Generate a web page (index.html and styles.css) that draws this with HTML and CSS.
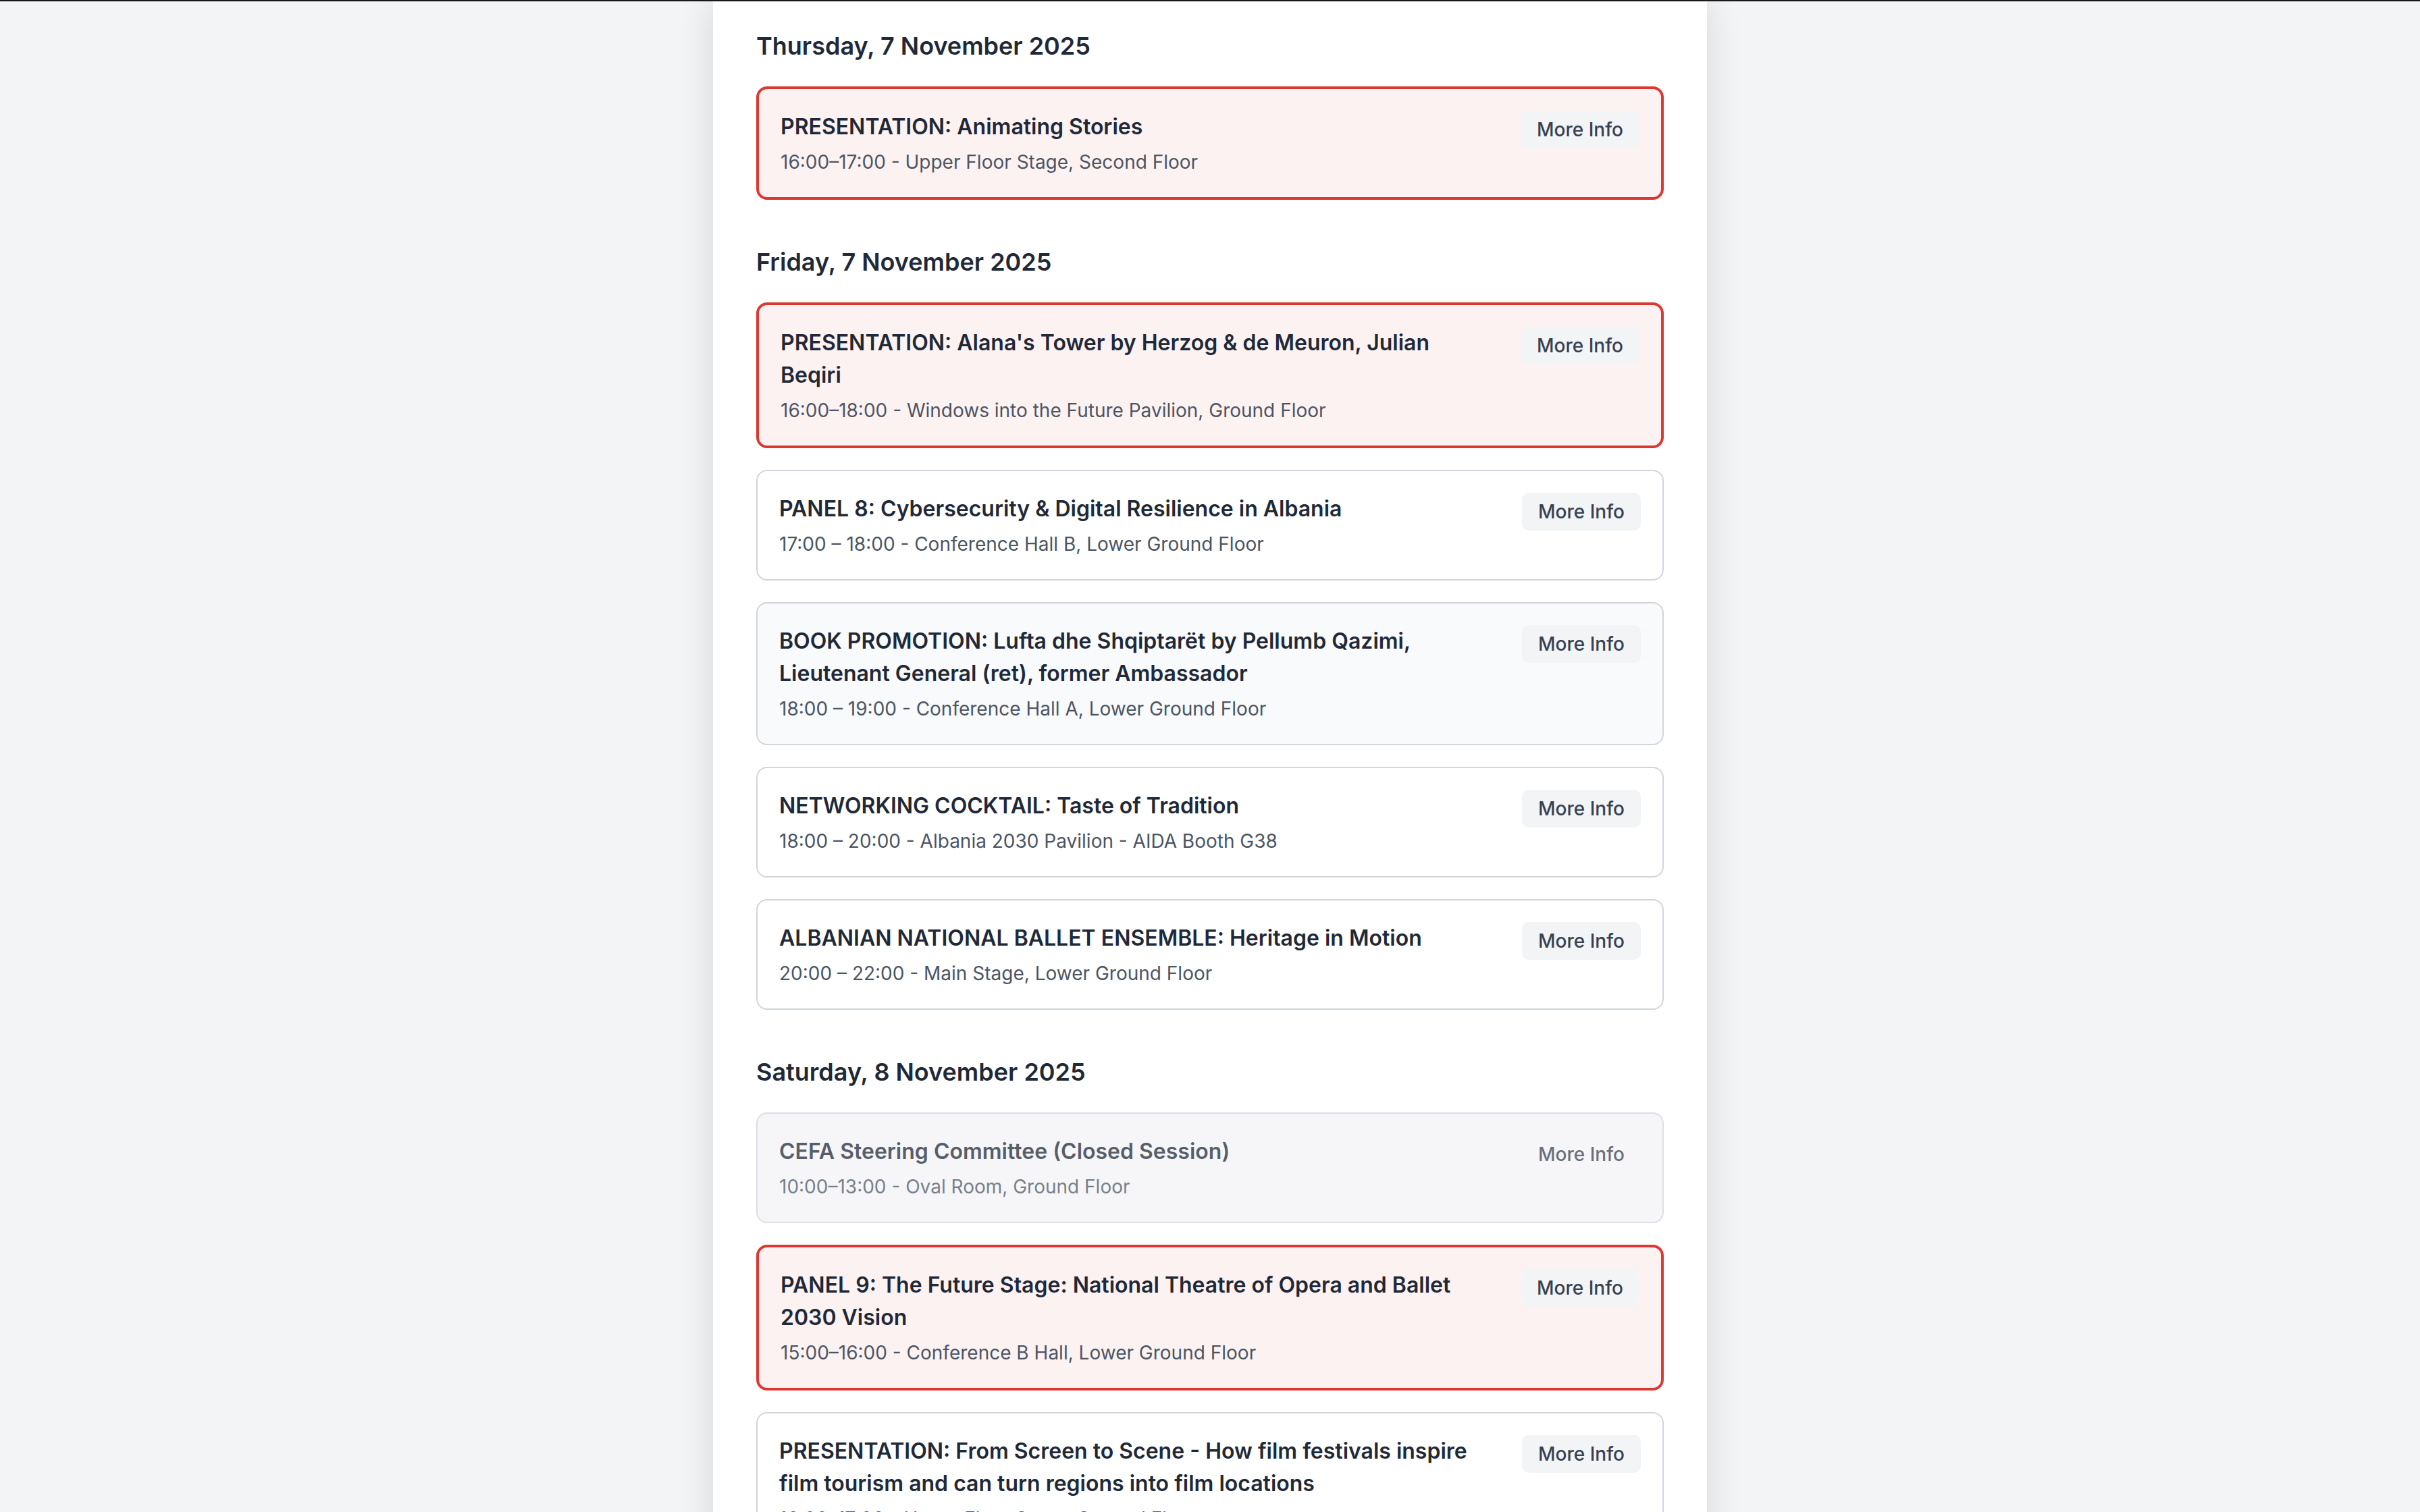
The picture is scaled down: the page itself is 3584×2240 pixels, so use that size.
FILE: index.html
```html
<!DOCTYPE html>
<html lang="en">
<head>
<meta charset="utf-8">
<title>Programme</title>
<link rel="stylesheet" href="styles.css">
</head>
<body>
<div class="topline"></div>
<main class="column">
  <section class="day">
    <h2 class="day-title">Thursday, 7 November 2025</h2>
    <div class="events">
      <div class="event event-highlight">
        <div class="event-text">
          <h3 class="event-title">PRESENTATION: Animating Stories</h3>
          <p class="event-meta">16:00–17:00 - Upper Floor Stage, Second Floor</p>
        </div>
        <button class="more">More Info</button>
      </div>
    </div>
  </section>

  <section class="day">
    <h2 class="day-title">Friday, 7 November 2025</h2>
    <div class="events">
      <div class="event event-highlight">
        <div class="event-text">
          <h3 class="event-title">PRESENTATION: Alana's Tower by Herzog &amp; de Meuron, Julian Beqiri</h3>
          <p class="event-meta">16:00–18:00 - Windows into the Future Pavilion, Ground Floor</p>
        </div>
        <button class="more">More Info</button>
      </div>
      <div class="event">
        <div class="event-text">
          <h3 class="event-title">PANEL 8: Cybersecurity &amp; Digital Resilience in Albania</h3>
          <p class="event-meta">17:00 – 18:00 - Conference Hall B, Lower Ground Floor</p>
        </div>
        <button class="more">More Info</button>
      </div>
      <div class="event event-soft">
        <div class="event-text">
          <h3 class="event-title">BOOK PROMOTION: Lufta dhe Shqiptarët by Pellumb Qazimi, Lieutenant General (ret), former Ambassador</h3>
          <p class="event-meta">18:00 – 19:00 - Conference Hall A, Lower Ground Floor</p>
        </div>
        <button class="more">More Info</button>
      </div>
      <div class="event">
        <div class="event-text">
          <h3 class="event-title">NETWORKING COCKTAIL: Taste of Tradition</h3>
          <p class="event-meta">18:00 – 20:00 - Albania 2030 Pavilion - AIDA Booth G38</p>
        </div>
        <button class="more">More Info</button>
      </div>
      <div class="event">
        <div class="event-text">
          <h3 class="event-title">ALBANIAN NATIONAL BALLET ENSEMBLE: Heritage in Motion</h3>
          <p class="event-meta">20:00 – 22:00 - Main Stage, Lower Ground Floor</p>
        </div>
        <button class="more">More Info</button>
      </div>
    </div>
  </section>

  <section class="day">
    <h2 class="day-title">Saturday, 8 November 2025</h2>
    <div class="events">
      <div class="event event-closed">
        <div class="event-text">
          <h3 class="event-title">CEFA Steering Committee (Closed Session)</h3>
          <p class="event-meta">10:00–13:00 - Oval Room, Ground Floor</p>
        </div>
        <button class="more">More Info</button>
      </div>
      <div class="event event-highlight">
        <div class="event-text">
          <h3 class="event-title">PANEL 9: The Future Stage: National Theatre of Opera and Ballet 2030 Vision</h3>
          <p class="event-meta">15:00–16:00 - Conference B Hall, Lower Ground Floor</p>
        </div>
        <button class="more">More Info</button>
      </div>
      <div class="event">
        <div class="event-text">
          <h3 class="event-title">PRESENTATION: From Screen to Scene - How film festivals inspire film tourism and can turn regions into film locations</h3>
          <p class="event-meta">16:00–17:00 - Upper Floor Stage, Second Floor</p>
        </div>
        <button class="more">More Info</button>
      </div>
    </div>
  </section>
</main>
</body>
</html>
```
FILE: styles.css
```css
* {
  box-sizing: border-box;
}

html, body {
  margin: 0;
  padding: 0;
}

body {
  background: #f3f4f6;
  font-family: Inter, "Noto Sans", "Liberation Sans", sans-serif;
  color: #1f2937;
  -webkit-font-smoothing: antialiased;
}

.topline {
  height: 2px;
  background: #1a1a1a;
}

.column {
  width: 1472px;
  margin: 0 auto;
  background: #ffffff;
  padding: 38px 64px 200px;
  box-shadow: 0 0 50px rgba(0, 0, 0, 0.12);
  display: flex;
  flex-direction: column;
  gap: 64px;
  min-height: 2400px;
}

.day-title {
  margin: 0 0 32px;
  font-size: 36px;
  line-height: 56px;
  font-weight: 600;
  color: #1f2937;
}

.events {
  display: flex;
  flex-direction: column;
  gap: 32px;
}

.event {
  display: flex;
  justify-content: space-between;
  align-items: flex-start;
  gap: 48px;
  padding: 32px;
  border: 2px solid #d1d5db;
  border-radius: 16px;
  background: #ffffff;
}

.event-highlight {
  border: 4px solid #dc3832;
  background: #fdf2f2;
}

.event-soft {
  background: #f9fafb;
}

.event-closed {
  background: #f3f4f6;
  opacity: 0.75;
}

.event-text {
  flex: 1;
  min-width: 0;
}

.event-title {
  margin: 0;
  font-size: 32px;
  line-height: 48px;
  font-weight: 600;
  color: #1f2937;
}

.event-meta {
  margin: 8px 0 0;
  font-size: 28px;
  line-height: 40px;
  color: #4b5563;
}

.more {
  flex-shrink: 0;
  font-family: inherit;
  font-size: 28px;
  line-height: 40px;
  font-weight: 500;
  color: #374151;
  background: #f3f4f6;
  border: none;
  border-radius: 10px;
  padding: 8px 24px;
  cursor: pointer;
}
```
